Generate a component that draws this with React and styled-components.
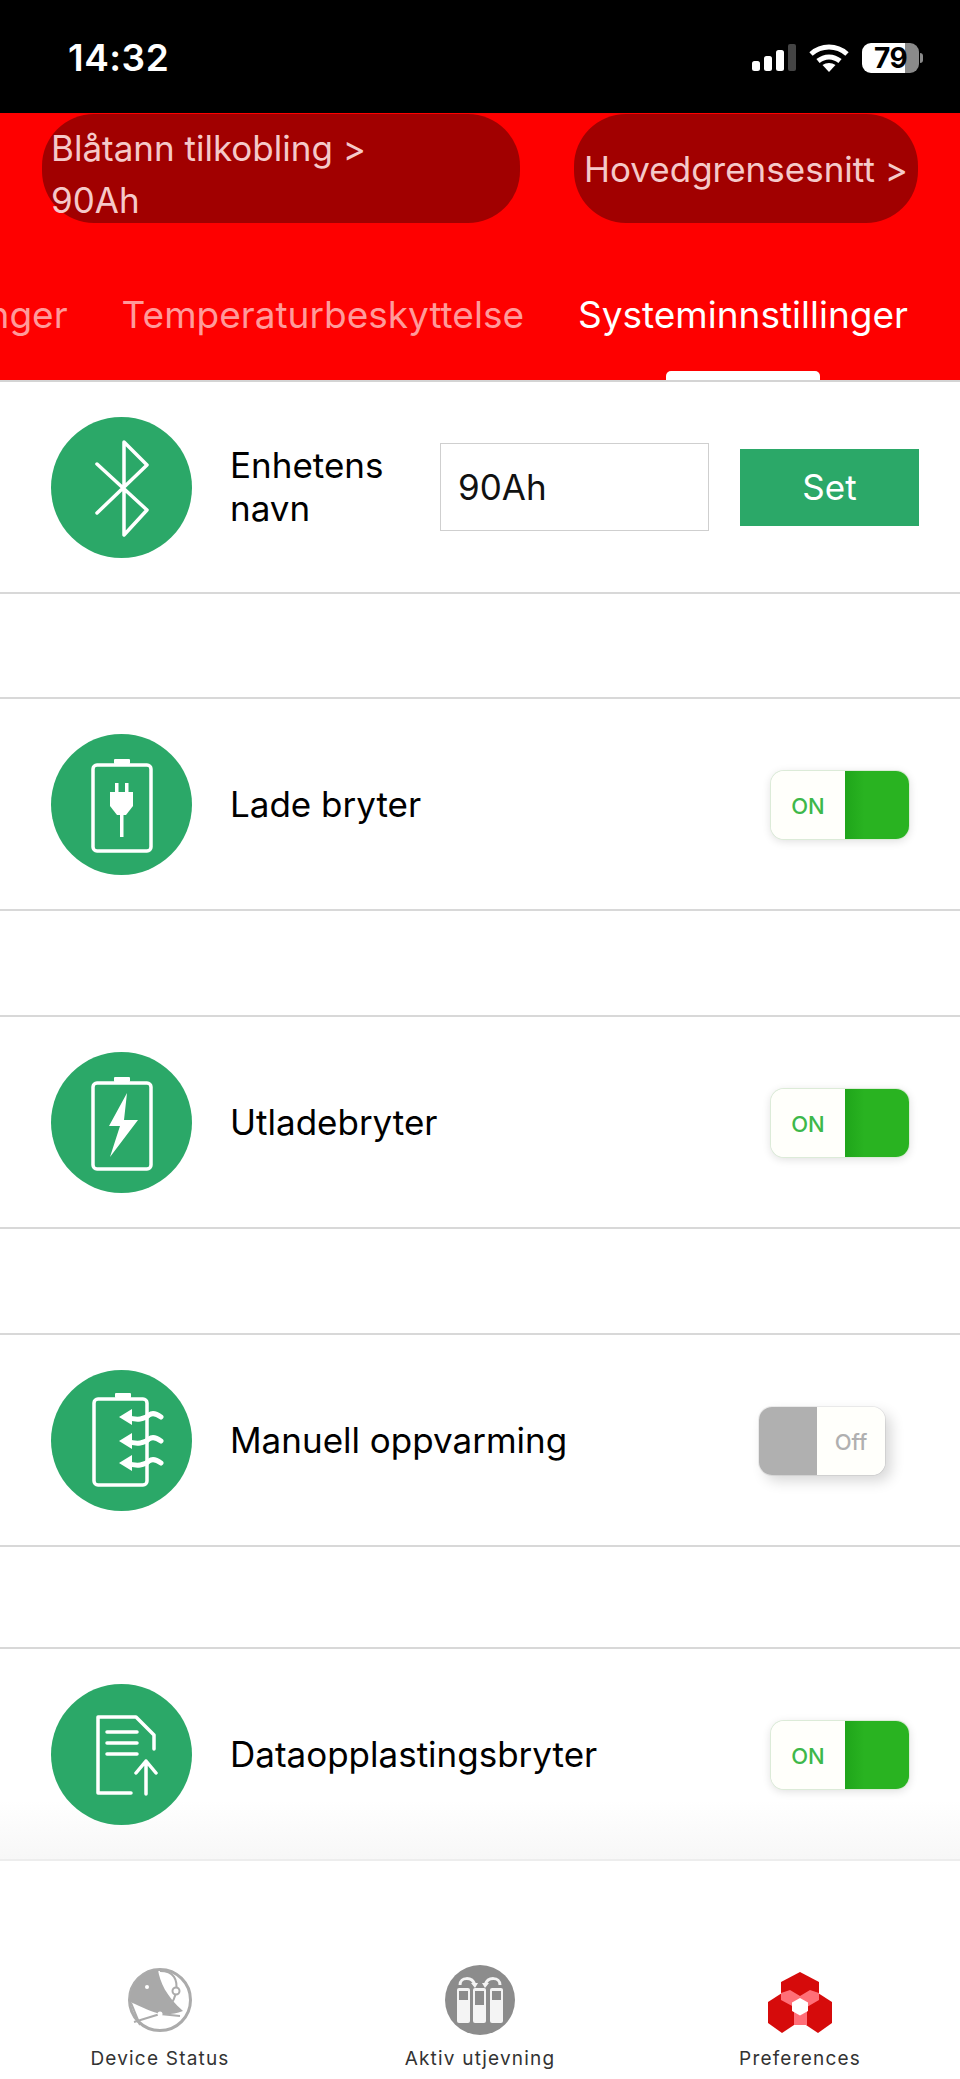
import React from 'react';
import styled, { createGlobalStyle } from 'styled-components';

const GlobalStyle = createGlobalStyle`
  * { box-sizing: border-box; }
  html, body { margin: 0; padding: 0; background: #fff; }
  body { font-family: Inter, "Liberation Sans", sans-serif; }
`;

const Page = styled.div`
  width: 960px;
  height: 2079px;
  display: flex;
  flex-direction: column;
  overflow: hidden;
  background: #fff;
`;

// Status bar
const StatusBar = styled.div`
  height: 113px;
  flex: none;
  background: #000;
  color: #fff;
  display: flex;
  align-items: center;
  justify-content: space-between;
  padding: 2px 41px 0 68px;
`;

const Clock = styled.span`
  font-size: 37px;
  font-weight: 600;
  letter-spacing: 0.5px;
`;

const StatusIcons = styled.div`
  display: flex;
  align-items: center;
  gap: 13px;
`;

const Battery = styled.div`
  position: relative;
  width: 57px;
  height: 30px;
  display: flex;
  align-items: center;
  justify-content: center;
  border-radius: 9px;
  background: linear-gradient(90deg, #fff 0 43px, #8a8a8a 43px);
  color: #000;
  font-size: 28px;
  font-weight: 700;
  letter-spacing: -0.5px;

  &::after {
    content: '';
    position: absolute;
    right: -4px;
    top: 10px;
    width: 3px;
    height: 10px;
    border-radius: 0 3px 3px 0;
    background: #8a8a8a;
  }
`;

// Red header
const Header = styled.header`
  height: 269px;
  flex: none;
  background: #fe0000;
  border-bottom: 2px solid #d4d4d4;
  display: flex;
  flex-direction: column;
`;

const PillRow = styled.div`
  display: flex;
  justify-content: space-between;
  padding: 1px 42px 0;
`;

const Pill = styled.div`
  width: ${p => p.$width}px;
  height: 109px;
  display: flex;
  align-items: center;
  padding-left: ${p => p.$inset}px;
  padding-top: ${p => p.$drop || 0}px;
  border-radius: 52px;
  background: #a10000;
  color: #f5c9c9;
  font-size: 35px;
  line-height: 52px;
  white-space: pre-line;
`;

const Tabs = styled.nav`
  flex: 1;
  display: flex;
  justify-content: flex-end;
  align-items: stretch;
  gap: 54px;
  padding-right: 52px;
  overflow: hidden;
`;

const Tab = styled.div`
  position: relative;
  flex: none;
  padding-top: 69px;
  font-size: 37px;
  line-height: 46px;
  color: ${p => (p.$active ? '#fff' : '#ff9a9a')};

  ${p => p.$active && `
    &::after {
      content: '';
      position: absolute;
      left: 88px;
      bottom: 0;
      width: 154px;
      height: 9px;
      border-radius: 5px 5px 0 0;
      background: #fff;
    }
  `}
`;

// Settings list
const List = styled.main`
  flex: none;
  display: flex;
  flex-direction: column;
`;

const Row = styled.section`
  height: ${p => (p.$first ? 212 : 214)}px;
  margin-top: ${p => p.$gap}px;
  display: flex;
  align-items: center;
  padding: 0 41px 0 51px;
  border-bottom: 2px solid ${p => (p.$fade ? '#ededed' : '#d8d8d8')};
  border-top: ${p => (p.$first ? 'none' : '2px solid #d8d8d8')};
  background: ${p => (p.$fade
    ? 'linear-gradient(180deg, #fff 0%, #fff 72%, #f7f7f7 100%)'
    : '#fff')};
`;

const IconCircle = styled.div`
  width: 141px;
  height: 141px;
  flex: none;
  border-radius: 50%;
  background: #2ba868;
  margin-right: 38px;

  svg {
    display: block;
  }
`;

const Label = styled.div`
  color: #000;
  font-size: 35px;
  line-height: 43px;
  ${p => p.$width && `width: ${p.$width}px; margin-right: 40px;`}
`;

const NameInput = styled.div`
  width: 269px;
  height: 88px;
  flex: none;
  display: flex;
  align-items: center;
  padding-left: 17px;
  margin-right: 31px;
  border: 1px solid #cfcfcf;
  color: #111;
  font-size: 35px;
`;

const SetButton = styled.button`
  width: 179px;
  height: 77px;
  flex: none;
  border: none;
  background: #2ba868;
  color: #fff;
  font-family: inherit;
  font-size: 35px;
`;

const Toggle = styled.div`
  margin-left: auto;
  margin-top: 2px;
  margin-right: ${p => (p.$on ? 10 : 34)}px;
  width: ${p => (p.$on ? 138 : 126)}px;
  height: 68px;
  flex: none;
  display: flex;
  flex-direction: ${p => (p.$on ? 'row' : 'row-reverse')};
  border-radius: 13px;
  overflow: hidden;
  box-shadow: ${p => (p.$on
    ? '0 0 0 1px #dcebd8, 0 2px 10px rgba(0, 0, 0, 0.14)'
    : '6px 6px 14px rgba(0, 0, 0, 0.16), 0 0 0 1px #efefef')};
`;

const ToggleFace = styled.div`
  width: ${p => (p.$on ? 74 : 68)}px;
  flex: none;
  display: flex;
  align-items: center;
  justify-content: center;
  padding-top: 1px;
  background: #fffffb;
  color: ${p => (p.$on ? '#3db84a' : '#b0b0b0')};
  font-size: 22px;
  font-weight: 500;
`;

const ToggleTrack = styled.div`
  flex: 1;
  background: ${p => (p.$on
    ? 'linear-gradient(90deg, #1fa51a 0%, #29b321 30%, #29b321 100%)'
    : '#b0b0b0')};
`;

// Bottom navigation
const BottomNav = styled.nav`
  flex: 1;
  display: grid;
  grid-template-columns: repeat(3, 320px);
  align-items: end;
  padding-bottom: 8px;
`;

const NavItem = styled.div`
  display: flex;
  flex-direction: column;
  align-items: center;
  gap: 7px;
`;

const NavLabel = styled.span`
  color: #333;
  font-size: 19px;
  line-height: 24px;
  letter-spacing: 1.2px;
`;

const Wifi = () => (
  <svg width="40" height="28" viewBox="0 0 40 28" fill="none" stroke="#fff" strokeWidth="5">
    <path d="M2 10c10.500-9.300 25.500-9.300 36 0" />
    <path d="M9 17c6.500-5.500 15.500-5.500 22 0" />
    <path d="M20 28l-6.500-7c3.800-2.700 9.200-2.700 13 0z" fill="#fff" stroke="none" />
  </svg>
);

const Signal = () => (
  <svg width="44" height="27" viewBox="0 0 44 27" fill="#fff">
    <rect x="0" y="17" width="8" height="10" rx="2.500" />
    <rect x="12" y="12" width="8" height="15" rx="2.500" />
    <rect x="24" y="6" width="8" height="21" rx="2.500" />
    <rect x="36" y="0" width="8" height="27" rx="2" fill="#444" />
  </svg>
);

const IconSvg = ({ children }) => (
  <svg width="141" height="141" viewBox="0 0 141 141" fill="none" stroke="#fff" strokeWidth="3.500" strokeLinecap="round" strokeLinejoin="round">
    {children}
  </svg>
);

const BatteryShell = ({ x = 42, w = 58, y = 31, h = 86 }) => (
  <>
    <rect x={x} y={y} width={w} height={h} rx="4" />
    <rect x={x + 21} y={y - 6} width="16" height="5" rx="1" fill="#fff" stroke="none" />
  </>
);

const BluetoothIcon = () => (
  <IconSvg>
    <path d="M46 47L96 93L73 118V25L96 48L46 96" />
  </IconSvg>
);

const PlugIcon = () => (
  <IconSvg>
    <BatteryShell />
    <g fill="#fff" stroke="none">
      <rect x="64" y="49" width="3.500" height="11" />
      <rect x="74" y="49" width="3.500" height="11" />
      <path d="M59 58H82V72L75 81H66L59 72Z" />
      <rect x="69" y="80" width="3.500" height="23" />
    </g>
  </IconSvg>
);

const BoltIcon = () => (
  <IconSvg>
    <BatteryShell />
    <path d="M76 41L58 74H69L59 105L87 68H73Z" fill="#fff" stroke="none" />
  </IconSvg>
);

const HeatArrow = ({ y }) => (
  <>
    <path d={`M76 ${y}C86 ${y + 4} 94 ${y + 2} 98 ${y - 2}C102 ${y - 5} 106 ${y - 3} 110 ${y}`} strokeWidth="5" />
    <path d={`M68 ${y}L81 ${y - 8}V${y + 8}Z`} fill="#fff" stroke="none" />
  </>
);

const HeatIcon = () => (
  <IconSvg>
    <BatteryShell x={43} w={53} y={29} h={86} />
    <HeatArrow y={47} />
    <HeatArrow y={71} />
    <HeatArrow y={93} />
  </IconSvg>
);

const UploadIcon = () => (
  <IconSvg>
    <path d="M80 109H47V33H85L103 51V65" />
    <path d="M56 48H86M56 59H86M56 70H86" />
    <path d="M95 110V77M85 89L95 77L105 89" />
  </IconSvg>
);

const GlobeIcon = () => (
  <svg width="80" height="80" viewBox="0 0 80 80" fill="none">
    <circle cx="40" cy="40" r="30.500" stroke="#ababab" strokeWidth="3" />
    <path
      d="M38 10C40 22 46 36 63 51C54 55 46 54 40 54C32 52 22 47 10 42C9 26 22 10 38 10Z"
      fill="#a9a9a9"
    />
    <path d="M40 54L14 62M40 54L60 56M11 43L20 65M40 11C54 11 58 20 56 31C55 38 53 42 50 44" stroke="#ababab" strokeWidth="2" />
    <circle cx="56" cy="31" r="3.500" fill="#fff" stroke="#ababab" strokeWidth="2" />
    <circle cx="27" cy="27" r="2" fill="#fff" />
    <circle cx="40" cy="54" r="2.500" fill="#fff" />
  </svg>
);

const Bottle = ({ x, fillY }) => (
  <>
    <rect x={x} y="28" width="13" height="35" rx="2" fill="#f4f4f4" />
    <rect x={x + 2} y="31" width="9" height={fillY - 31} fill="#8c8c8c" />
  </>
);

const BalanceIcon = () => (
  <svg width="80" height="80" viewBox="0 4 80 80" fill="none">
    <circle cx="40" cy="44" r="35" fill="#8c8c8c" />
    <g transform="translate(0 4)">
      <Bottle x={17} fillY={40} />
      <Bottle x={33} fillY={45} />
      <Bottle x={50} fillY={40} />
      <path d="M20 25C20 17 32 16 35 25M60 25C60 17 48 16 45 25" stroke="#f4f4f4" strokeWidth="3" />
      <path d="M31 23H38L35 28ZM42 23H49L45 28Z" fill="#f4f4f4" />
    </g>
  </svg>
);

const PreferencesIcon = () => (
  <svg width="80" height="80" viewBox="0 0 80 80">
    <path d="M40 12L59 22V40L40 50L21 40V22Z" fill="#d60b0b" />
    <path d="M22 33L37 42V63L22 73L8 63V42Z" fill="#d60b0b" />
    <path d="M58 33L72 42V63L58 73L43 63V42Z" fill="#d60b0b" />
    <path d="M21 33L30 30L40 36L50 30L59 33V40L47 47V65H34V47L21 40Z" fill="#ff6f78" />
    <path d="M40 38L48 42.500V51L40 55.500L32 51V42.500Z" fill="#fff" />
  </svg>
);

function App() {
  return (
    <Page>
      <GlobalStyle />
      <StatusBar>
        <Clock>14:32</Clock>
        <StatusIcons>
          <Signal />
          <Wifi />
          <Battery>79</Battery>
        </StatusIcons>
      </StatusBar>

      <Header>
        <PillRow>
          <Pill $width={478} $inset={9} $drop={10}>{'Blåtann tilkobling >\n90Ah'}</Pill>
          <Pill $width={344} $inset={10}>{'Hovedgrensesnitt >'}</Pill>
        </PillRow>
        <Tabs>
          <Tab>Ladeinnstillinger</Tab>
          <Tab>Temperaturbeskyttelse</Tab>
          <Tab $active>Systeminnstillinger</Tab>
        </Tabs>
      </Header>

      <List>
        <Row $first $gap={0}>
          <IconCircle><BluetoothIcon /></IconCircle>
          <Label $width={171}>Enhetens navn</Label>
          <NameInput>90Ah</NameInput>
          <SetButton>Set</SetButton>
        </Row>
        <Row $gap={103}>
          <IconCircle><PlugIcon /></IconCircle>
          <Label>Lade bryter</Label>
          <Toggle $on><ToggleFace $on>ON</ToggleFace><ToggleTrack $on /></Toggle>
        </Row>
        <Row $gap={104}>
          <IconCircle><BoltIcon /></IconCircle>
          <Label>Utladebryter</Label>
          <Toggle $on><ToggleFace $on>ON</ToggleFace><ToggleTrack $on /></Toggle>
        </Row>
        <Row $gap={104}>
          <IconCircle><HeatIcon /></IconCircle>
          <Label>Manuell oppvarming</Label>
          <Toggle><ToggleFace>Off</ToggleFace><ToggleTrack /></Toggle>
        </Row>
        <Row $gap={100} $fade>
          <IconCircle><UploadIcon /></IconCircle>
          <Label>Dataopplastingsbryter</Label>
          <Toggle $on><ToggleFace $on>ON</ToggleFace><ToggleTrack $on /></Toggle>
        </Row>
      </List>

      <BottomNav>
        <NavItem><GlobeIcon /><NavLabel>Device Status</NavLabel></NavItem>
        <NavItem><BalanceIcon /><NavLabel>Aktiv utjevning</NavLabel></NavItem>
        <NavItem><PreferencesIcon /><NavLabel>Preferences</NavLabel></NavItem>
      </BottomNav>
    </Page>
  );
}

export default App;
